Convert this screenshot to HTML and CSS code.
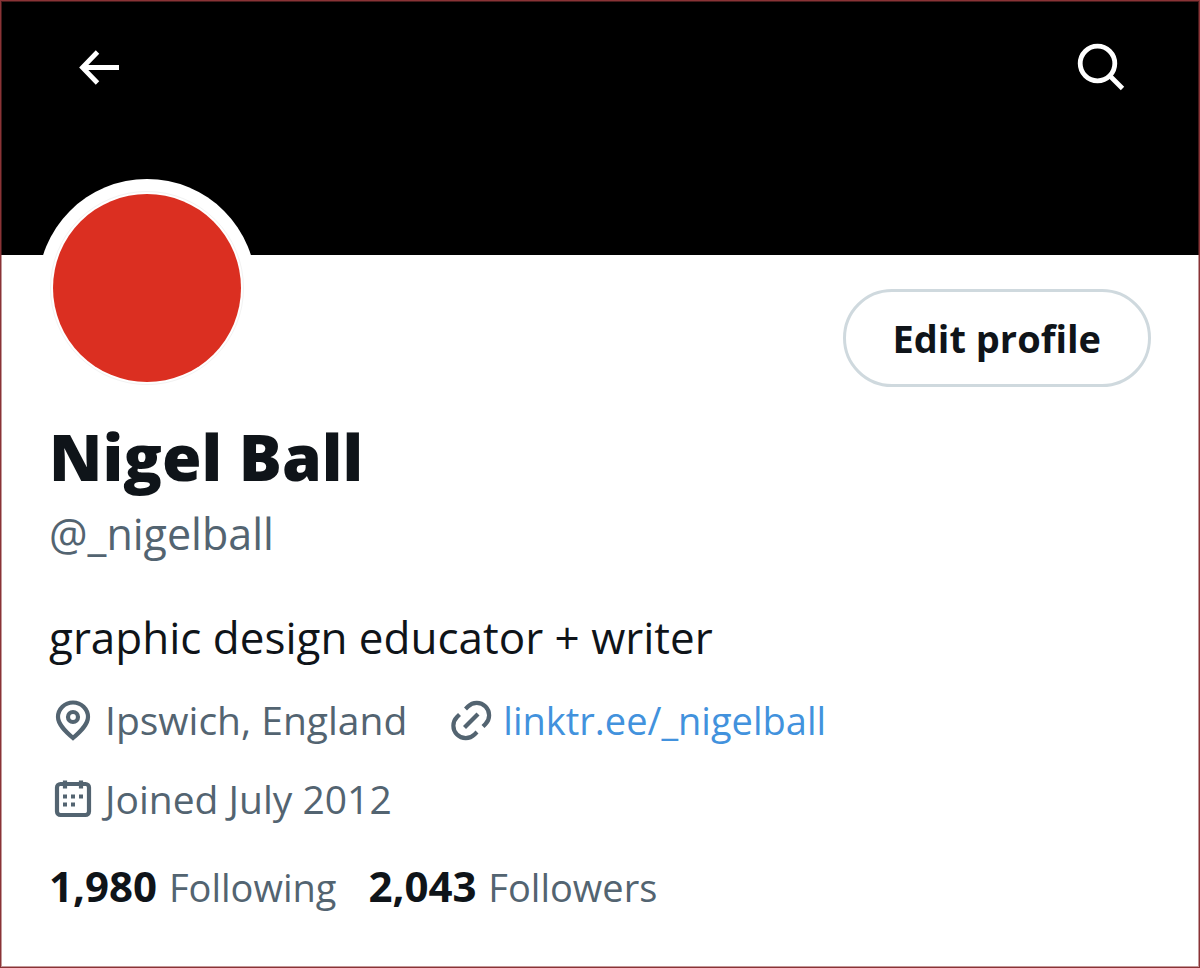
FILE: index.html
```
<!DOCTYPE html>
<html lang="en">
<head>
    <meta charset="UTF-8">
    <meta name="viewport" content="width=device-width, initial-scale=1.0">
    <title>Nigel Ball (@_nigelball)</title>
    <link rel="stylesheet" href="styles.css">
</head>
<body>
    <main class="profile">
        <header class="banner">
            <button type="button" class="icon-button" aria-label="Back">
                <svg width="44" height="36" viewBox="0 0 44 36" fill="none" stroke="#fff" stroke-width="4.8">
                    <path d="M42 18.500H6M20.500 3L5.500 18.500l15 15.500"/>
                </svg>
            </button>
            <button type="button" class="icon-button" aria-label="Search">
                <svg width="48" height="48" viewBox="0 0 48 48" fill="none" stroke="#fff" stroke-width="4.8">
                    <circle cx="20.500" cy="20.500" r="17.300"/>
                    <path d="M32.500 32.500L45.500 45.500"/>
                </svg>
            </button>
        </header>

        <section class="details">
            <div class="top-row">
                <div class="avatar">
                    <div class="avatar-image"></div>
                </div>
                <button type="button" class="edit-button">Edit profile</button>
            </div>

            <h1 class="name">Nigel Ball</h1>
            <p class="handle">@_nigelball</p>
            <p class="bio">graphic design educator + writer</p>

            <div class="meta">
                <span class="meta-item">
                    <svg class="meta-icon" viewBox="0 0 44 44" fill="none" stroke="#536471" stroke-width="4.2">
                        <path d="M22 40C14.500 33.500 7 26.500 7 19a15 14.500 0 0 1 30 0C37 26.500 29.500 33.500 22 40z"/>
                        <circle cx="22" cy="19" r="5"/>
                    </svg>
                    Ipswich, England
                </span>
                <span class="meta-item">
                    <svg class="meta-icon" viewBox="0 0 44 44" fill="none" stroke="#536471" stroke-width="4.2">
                        <path d="M16.500 11L19 8.500a12.300 12.300 0 0 1 17.500 17.500L34 28.500"/>
                        <path d="M10.500 16.500L8 19a12.300 12.300 0 0 0 17.500 17.500L28 34"/>
                        <path d="M15.500 29.500L29 16"/>
                    </svg>
                    <a href="#">linktr.ee/_nigelball</a>
                </span>
            </div>
            <div class="meta">
                <span class="meta-item">
                    <svg class="meta-icon" viewBox="0 0 44 44" fill="none" stroke="#536471" stroke-width="4.2">
                        <rect x="6" y="7" width="32" height="31" rx="3.500"/>
                        <path d="M14 3.500v8M30 3.500v8"/>
                        <path d="M12 19.500h4M20 19.500h4M28 19.500h4M12 27.500h4M20 27.500h4"/>
                    </svg>
                    Joined July 2012
                </span>
            </div>

            <div class="stats">
                <a href="#"><strong>1,980</strong> Following</a>
                <a href="#"><strong>2,043</strong> Followers</a>
            </div>
        </section>
    </main>
</body>
</html>
```
FILE: styles.css
```
/* General Styles */
* {
    box-sizing: border-box;
}

body {
    margin: 0;
    font-family: 'Open Sans', sans-serif;
    background-color: #fff;
    color: #0f1419;
}

.profile {
    min-height: 100vh;
    border: 1px solid #8a3336;
    outline: 1px solid rgba(138, 51, 54, 0.5);
    outline-offset: -2px;
}

/* Banner */
.banner {
    display: flex;
    justify-content: space-between;
    align-items: flex-start;
    height: 254px;
    padding: 16px 48px;
    background: #000;
}

.icon-button {
    display: flex;
    justify-content: center;
    align-items: center;
    width: 100px;
    height: 100px;
    padding: 0;
    border: none;
    border-radius: 50%;
    background: #000;
    cursor: pointer;
}

/* Profile details */
.details {
    padding: 0 48px 48px;
}

.top-row {
    display: flex;
    justify-content: space-between;
    align-items: flex-start;
}

/* Overlaps the bottom of the banner */
.avatar {
    margin-top: -76px;
    margin-left: -11px;
    padding: 12px;
    border-radius: 50%;
    background: #fff;
}

.avatar-image {
    width: 194px;
    height: 194px;
    padding: 2px;
    border: 1px solid #f2f2f2;
    border-radius: 50%;
    background: #db2f21;
    background-clip: content-box;
}

.edit-button {
    margin-top: 34px;
    padding: 0 47px;
    border: 3px solid #cfd9de;
    border-radius: 49px;
    background: #fff;
    color: #0f1419;
    font-family: inherit;
    font-size: 38px;
    font-weight: bold;
    line-height: 92px;
    cursor: pointer;
}

.name {
    margin: 16px 0 0;
    font-size: 64px;
    font-weight: 800;
    line-height: 88px;
}

.handle {
    margin: 0;
    color: #536471;
    font-size: 43px;
    line-height: 66px;
}

.bio {
    margin: 38px 0 0;
    font-size: 44px;
    line-height: 64px;
}

.meta {
    display: flex;
    flex-wrap: wrap;
    gap: 0 40px;
    margin-top: 23px;
    color: #536471;
    font-size: 39px;
    line-height: 56px;
}

.meta-item {
    display: flex;
    align-items: center;
    gap: 10px;
}

.meta-icon {
    width: 44px;
    height: 44px;
    margin-left: 2px;
}

.meta a {
    color: #4292dd;
    font-size: 38px;
    text-decoration: none;
}

.stats {
    display: flex;
    flex-wrap: wrap;
    gap: 0 32px;
    margin-top: 31px;
    font-size: 38px;
    line-height: 56px;
}

.stats a {
    color: #536471;
    text-decoration: none;
}

.stats strong {
    margin-right: 2px;
    color: #0f1419;
    font-size: 42px;
}
```
